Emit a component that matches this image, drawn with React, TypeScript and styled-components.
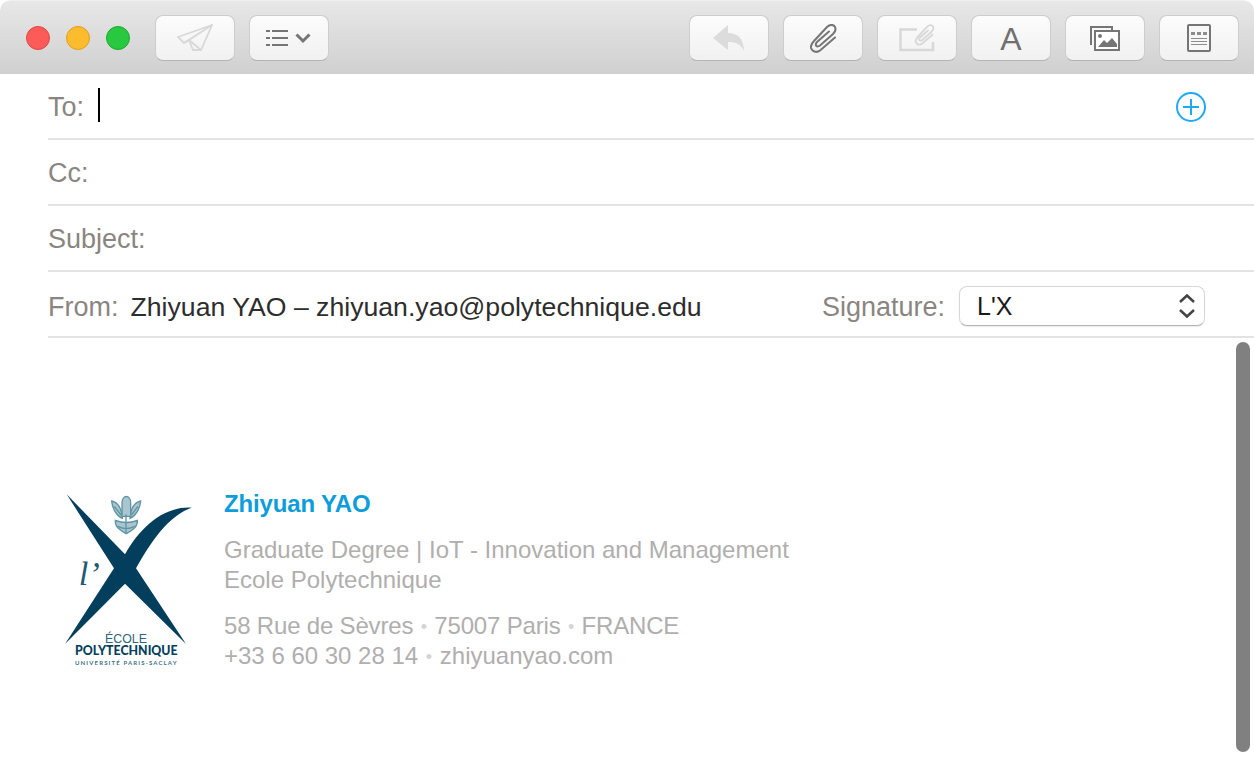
import React from "react";
import styled, { createGlobalStyle } from "styled-components";

const Global = createGlobalStyle`
  html, body { margin: 0; padding: 0; background: #fff; overflow: hidden; }
  body { font-family: "Liberation Sans", Arial, sans-serif; }
`;

const Window = styled.div`
  position: relative;
  width: 1254px;
  height: 760px;
  background: #fff;
  overflow: hidden;
  border-radius: 10px 10px 0 0;
`;

const Toolbar = styled.header`
  height: 74px;
  box-sizing: border-box;
  padding: 14px 15px 0 26px;
  display: flex;
  align-items: flex-start;
  background: linear-gradient(#e8e8e8 0, #e6e6e6 4px, #d0d0d0 100%);
  border-top: 1px solid #f0f0f0;
  border-radius: 10px 10px 0 0;
`;

const Lights = styled.div`
  display: flex;
  gap: 16px;
  margin: 11px 25px 0 0;
`;

const Light = styled.span<{ $fill: string; $edge: string }>`
  width: 24px;
  height: 24px;
  box-sizing: border-box;
  border-radius: 50%;
  background: ${(p) => p.$fill};
  border: 1px solid ${(p) => p.$edge};
`;

const ToolGroup = styled.div`
  display: flex;
  gap: 14px;
`;

const RightGroup = styled(ToolGroup)`
  margin-left: auto;
`;

const ToolButton = styled.div`
  width: 80px;
  height: 46px;
  box-sizing: border-box;
  border-radius: 8px;
  background: linear-gradient(#fcfcfc, #f1f1f1);
  border: 1px solid #cdcdcd;
  border-bottom-color: #b4b4b4;
  display: flex;
  align-items: center;
  justify-content: center;
  color: #757575;
`;

const FontGlyph = styled.span`
  font-size: 32px;
  line-height: 1;
  color: #707070;
  margin-top: 2px;
`;

const Row = styled.div`
  height: 66px;
  box-sizing: border-box;
  margin-left: 48px;
  padding-right: 49px;
  border-bottom: 2px solid #e3e3e3;
  display: flex;
  align-items: center;
  font-size: 27px;
  color: #8a8580;
`;

const FromRow = styled(Row)`
  padding-top: 4px;
`;

const Label = styled.span`
  line-height: 1;
  margin-top: 2px;
`;

const Caret = styled.span`
  width: 2px;
  height: 34px;
  background: #000;
  margin: -2px 0 0 14px;
`;

const AddButton = styled.span`
  margin: 2px -1px 0 auto;
  display: flex;
  color: #1fa9f4;
`;

const Sender = styled.span`
  margin: 2px 0 0 12px;
  color: #2d2d2d;
  font-size: 26.65px;
  line-height: 1;
`;

const SignatureLabel = styled.span`
  margin: 2px 0 0 auto;
  line-height: 1;
`;

const Select = styled.div`
  width: 246px;
  height: 40px;
  margin-left: 14px;
  box-sizing: border-box;
  padding: 0 8px 0 17px;
  border-radius: 8px;
  background: #fff;
  border: 1px solid #d6d6d6;
  border-bottom-color: #b5b5b5;
  box-shadow: 0 1px 1px rgba(0, 0, 0, 0.08);
  display: flex;
  align-items: center;
  justify-content: space-between;
  font-size: 25px;
  color: #1a1a1a;
`;

const Body = styled.main`
  padding: 143px 0 0 50px;
  display: flex;
`;

const Logo = styled.svg`
  flex: none;
  display: block;
`;

const Card = styled.div`
  margin: 8px 0 0 24px;
  color: #b0aeae;
  font-size: 24px;
  line-height: 30px;
`;

const Name = styled.div`
  font-weight: 700;
  color: #0d9ddb;
  line-height: 30px;
  letter-spacing: -0.15px;
  margin-bottom: 16px;
`;

const Block = styled.div`
  margin-bottom: 16px;
`;

const Line = styled.div<{ $tight?: boolean }>`
  letter-spacing: ${(p) => (p.$tight ? "-0.18px" : "0")};
`;

const Dot = styled.span`
  color: #d4d4d4;
  font-size: 18px;
  line-height: 0;
  margin: 0 1px;
  vertical-align: 1px;
`;

const Scrollbar = styled.div`
  position: absolute;
  right: 4px;
  top: 342px;
  bottom: 8px;
  width: 14px;
  border-radius: 7px;
  background: #808080;
`;

const Stroke = { fill: "none", stroke: "currentColor" } as const;
const CLIP =
  "M25 13.5 10 26.500C6 29.500 2 27 1 24 .5 21 2 19 4 17L17 3C20 0 24 .5 25 3 26.500 6 25 8 23 10L10 21.500C8 23 6.500 22.500 6 21.500 5.500 20 6 19 7 18L19 7.500";

export default function App() {
  return (
    <Window>
      <Global />
      <Toolbar>
        <Lights>
          <Light $fill="#fc5b57" $edge="#e2463f" />
          <Light $fill="#fdbc2e" $edge="#e09e1f" />
          <Light $fill="#28c840" $edge="#1aab29" />
        </Lights>
        <ToolGroup>
          <ToolButton>
            <svg width="36" height="28" viewBox="0 0 36 28" {...Stroke} style={{ color: "#d8d8d8" }} strokeWidth="1.800">
              <path d="M35 1 1 13l6 6 5-3 4 10h8L35 1Z" />
              <path d="M35 1 7 19M35 1 12 16l12 10" />
            </svg>
          </ToolButton>
          <ToolButton>
            <svg width="46" height="18" viewBox="0 0 46 18">
              <g fill="#757575">
                <rect x="0" y="1" width="4" height="2" />
                <rect x="6" y="1" width="16" height="2" />
                <rect x="0" y="8" width="4" height="2" />
                <rect x="6" y="8" width="16" height="2" />
                <rect x="0" y="15" width="4" height="2" />
                <rect x="6" y="15" width="16" height="2" />
              </g>
              <path d="M30.500 5.500 37 12l6.500-6.500" fill="none" stroke="#757575" strokeWidth="3" />
            </svg>
          </ToolButton>
        </ToolGroup>
        <RightGroup>
          <ToolButton>
            <svg width="32" height="26" viewBox="0 0 32 26">
              <path d="M0 13 15 0v8c10 0 16 6 16 18-3-7-8-9-16-9v8Z" fill="#dcdcdc" />
            </svg>
          </ToolButton>
          <ToolButton>
            <svg width="27" height="29" viewBox="0 0 27 29" {...Stroke} strokeWidth="2" strokeLinecap="round">
              <path d={CLIP} />
            </svg>
          </ToolButton>
          <ToolButton>
            <svg width="36" height="28" viewBox="0 0 36 28" style={{ color: "#d8d8d8" }} {...Stroke}>
              <path d="M18 5.500H1.500v20.500h32.500v-8" strokeWidth="2.500" />
              <g transform="translate(16 .5) scale(.72)" strokeWidth="2.600">
                <path d={CLIP} />
              </g>
            </svg>
          </ToolButton>
          <ToolButton>
            <FontGlyph>A</FontGlyph>
          </ToolButton>
          <ToolButton>
            <svg width="30" height="25" viewBox="0 0 30 25">
              <path d="M1 19V1h21v4" {...Stroke} strokeWidth="2" />
              <rect x="5" y="5" width="24" height="19" fill="#fff" stroke="currentColor" strokeWidth="2" />
              <circle cx="10" cy="10" r="2" fill="currentColor" />
              <path d="M8 21l6-7 3 3 5-5 5 6v3Z" fill="currentColor" />
            </svg>
          </ToolButton>
          <ToolButton>
            <svg width="24" height="28" viewBox="0 0 24 28">
              <rect x="1" y="1" width="22" height="26" rx="1" fill="#f7f7f7" stroke="currentColor" strokeWidth="2" />
              <g fill="#8c8c8c">
                <rect x="4" y="8" width="4" height="3" />
                <rect x="10" y="8" width="4" height="3" />
                <rect x="16" y="8" width="4" height="3" />
                <rect x="4" y="14" width="16" height="1" />
                <rect x="4" y="17" width="16" height="1" />
                <rect x="4" y="20" width="16" height="1" />
              </g>
            </svg>
          </ToolButton>
        </RightGroup>
      </Toolbar>

      <Row>
        <Label>To:</Label>
        <Caret />
        <AddButton>
          <svg width="30" height="30" viewBox="0 0 30 30" {...Stroke} strokeWidth="2">
            <circle cx="15" cy="15" r="14" />
            <path d="M7 15h16M15 7v16" />
          </svg>
        </AddButton>
      </Row>
      <Row>
        <Label>Cc:</Label>
      </Row>
      <Row>
        <Label>Subject:</Label>
      </Row>
      <FromRow>
        <Label>From:</Label>
        <Sender>Zhiyuan YAO – zhiyuan.yao@polytechnique.edu</Sender>
        <SignatureLabel>Signature:</SignatureLabel>
        <Select>
          L'X
          <svg width="18" height="26" viewBox="0 0 18 26" fill="none" stroke="#444" strokeWidth="2.500">
            <path d="M2 9l7-6.500L16 9M2 17l7 6.500 7-6.500" />
          </svg>
        </Select>
      </FromRow>

      <Body>
        <Logo width="150" height="195" viewBox="0 0 450 585">
          <path d="M50 40 225 220C270 140 340 75 425 80 370 100 320 150 258 262L408 489 225 308 45 489 192 262Z" fill="#033f5c" />
          <g fill="#a9c6cf" stroke="#5f94a5" strokeWidth="4">
            <path d="M185 60c18 4 30 18 32 52-16-6-30-28-32-52Z" />
            <path d="M272 60c-18 4-30 18-32 52 16-6 30-28 32-52Z" />
            <path d="M196 118c20 8 46 8 66 0 2 18-12 28-33 40-22-12-35-22-33-40Z" />
            <path d="M216 66c0-26 26-26 26 0v40h-26Z" />
          </g>
          <g fill="none" stroke="#5f94a5" strokeWidth="4">
            <path d="M193 76l20 26M264 76l-20 26M228 100v58M204 136c14 8 34 8 50 0" />
          </g>
          <text x="86" y="312" fontFamily="'Liberation Serif', serif" fontStyle="italic" fontSize="104" fill="#1f5a75">l’</text>
          <text x="228" y="487" textAnchor="middle" fontFamily="'Liberation Sans', sans-serif" fontSize="37" fill="#2f6479">ÉCOLE</text>
          <text x="229" y="522" textAnchor="middle" fontFamily="Lato, sans-serif" fontWeight="900" fontSize="37" fill="#033f5c">POLYTECHNIQUE</text>
          <text x="229" y="552" textAnchor="middle" fontFamily="Lato, sans-serif" fontWeight="700" fontSize="18" letterSpacing="3.400" fill="#3f7488">UNIVERSITÉ PARIS-SACLAY</text>
        </Logo>
        <Card>
          <Name>Zhiyuan YAO</Name>
          <Block>
            Graduate Degree | IoT - Innovation and Management
            <br />
            Ecole Polytechnique
          </Block>
          <Block>
            <Line $tight>
              58 Rue de Sèvres <Dot>•</Dot> 75007 Paris <Dot>•</Dot> FRANCE
            </Line>
            <Line>
              +33 6 60 30 28 14 <Dot>•</Dot> zhiyuanyao.com
            </Line>
          </Block>
        </Card>
      </Body>
      <Scrollbar />
    </Window>
  );
}
